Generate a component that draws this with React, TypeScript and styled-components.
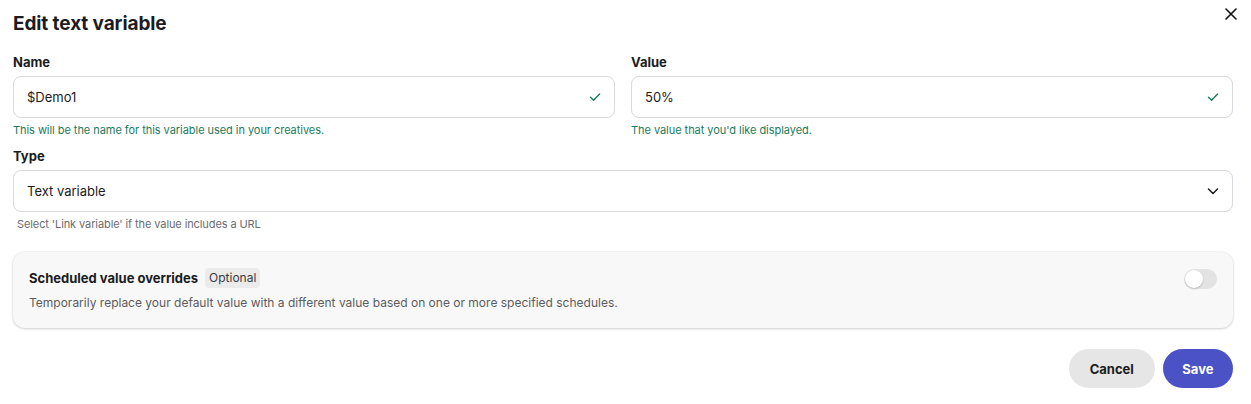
import React from "react";
import styled, { createGlobalStyle } from "styled-components";

const Global = createGlobalStyle`
  html, body { margin: 0; padding: 0; background: #fff; }
  body { font-family: "Inter", "Noto Sans", sans-serif; color: #1c1c1e; }
  * { box-sizing: border-box; }
`;

const Dialog = styled.div`
  width: 1251px;
  height: 404px;
  padding: 12px 18px 0 13px;
  display: flex;
  flex-direction: column;
`;

const Header = styled.div`
  display: flex;
  align-items: flex-start;
  justify-content: space-between;
  height: 42px;
`;

const Title = styled.h1`
  margin: 0;
  font-size: 19px;
  line-height: 24px;
  font-weight: 700;
  letter-spacing: -0.1px;
  color: #1c1c1e;
`;

const CloseButton = styled.button`
  border: 0;
  background: none;
  padding: 0;
  margin: -6px -6px 0 0;
  width: 16px;
  height: 16px;
  display: flex;
  align-items: center;
  justify-content: center;
  color: #111;
`;

const Row = styled.div`
  display: grid;
  grid-template-columns: 1fr 1fr;
  column-gap: 16px;
  width: 1220px;
`;

const Field = styled.div`
  display: flex;
  flex-direction: column;
`;

const Label = styled.label`
  font-size: 13px;
  font-weight: 700;
  line-height: 16px;
  margin-bottom: 6px;
  color: #1c1c1e;
`;

const InputBox = styled.div`
  height: 42px;
  border: 1px solid #d9d9de;
  border-radius: 8px;
  display: flex;
  align-items: center;
  justify-content: space-between;
  padding: 0 12px 0 13px;
  font-size: 13px;
  color: #1c1c1e;
  background: #fff;
`;

const Help = styled.div<{ $tone?: "ok" | "muted" }>`
  font-size: 11px;
  line-height: 14px;
  margin-top: 5px;
  letter-spacing: ${(p) => (p.$tone === "ok" ? "-0.05px" : "-0.1px")};
  color: ${(p) => (p.$tone === "ok" ? "#1b7a5e" : "#6b6b70")};
  padding-left: ${(p) => (p.$tone === "ok" ? "0" : "4px")};
`;

const TypeField = styled(Field)`
  width: 1220px;
  margin-top: 11px;
`;

const Card = styled.section`
  width: 1220px;
  margin-top: 21px;
  height: 76px;
  background: #f8f8f8;
  border-radius: 12px;
  box-shadow: 0 1px 3px rgba(0, 0, 0, 0.16), 0 0 0 1px rgba(0, 0, 0, 0.03);
  display: flex;
  justify-content: space-between;
  padding: 16px 16px 0 16px;
`;

const CardText = styled.div`
  display: flex;
  flex-direction: column;
  gap: 7px;
`;

const CardTitleRow = styled.div`
  display: flex;
  align-items: center;
  gap: 7px;
`;

const CardTitle = styled.span`
  font-size: 13px;
  font-weight: 700;
  color: #1c1c1e;
  line-height: 20px;
`;

const Badge = styled.span`
  font-size: 12px;
  line-height: 20px;
  padding: 0 4px;
  border-radius: 4px;
  background: #ebebeb;
  color: #3a3a3e;
`;

const CardDesc = styled.div`
  font-size: 12px;
  line-height: 16px;
  color: #5c5c60;
`;

const Toggle = styled.div`
  width: 33px;
  height: 20px;
  border-radius: 10px;
  background: #e3e3e3;
  position: relative;
  margin-top: 1px;
  &::after {
    content: "";
    position: absolute;
    left: 1px;
    top: 1px;
    width: 18px;
    height: 18px;
    border-radius: 50%;
    background: #fff;
    box-shadow: 0 1px 2px rgba(0, 0, 0, 0.2);
  }
`;

const Footer = styled.div`
  width: 1220px;
  display: flex;
  justify-content: flex-end;
  gap: 8px;
  margin-top: 21px;
`;

const Button = styled.button<{ $primary?: boolean }>`
  height: 39px;
  border-radius: 20px;
  border: 0;
  padding: 0 ${(p) => (p.$primary ? "19.5px" : "21px")};
  font-family: inherit;
  font-size: 13px;
  font-weight: 700;
  background: ${(p) => (p.$primary ? "#4b52c6" : "#e6e6e6")};
  color: ${(p) => (p.$primary ? "#fff" : "#1c1c1e")};
`;

const Check = () => (
  <svg width="14" height="14" viewBox="0 0 14 14" fill="none">
    <path d="M2.5 7.2 5.6 10.2 11.6 4" stroke="#1b7a5e" strokeWidth="1.4" strokeLinecap="round" strokeLinejoin="round" />
  </svg>
);

const Chevron = () => (
  <svg width="14" height="14" viewBox="0 0 14 14" fill="none">
    <path d="M2.5 5 7 9.5 11.5 5" stroke="#1c1c1e" strokeWidth="1.5" strokeLinecap="round" strokeLinejoin="round" />
  </svg>
);

const Cross = () => (
  <svg width="14" height="14" viewBox="0 0 14 14" fill="none">
    <path d="M2 2 12 12M12 2 2 12" stroke="#111" strokeWidth="1.6" strokeLinecap="round" />
  </svg>
);

export default function App() {
  return (
    <>
      <Global />
      <Dialog>
        <Header>
          <Title>Edit text variable</Title>
          <CloseButton aria-label="Close">
            <Cross />
          </CloseButton>
        </Header>
        <Row>
          <Field>
            <Label>Name</Label>
            <InputBox>
              <span>$Demo1</span>
              <Check />
            </InputBox>
            <Help $tone="ok">This will be the name for this variable used in your creatives.</Help>
          </Field>
          <Field>
            <Label>Value</Label>
            <InputBox>
              <span>50%</span>
              <Check />
            </InputBox>
            <Help $tone="ok">The value that you'd like displayed.</Help>
          </Field>
        </Row>
        <TypeField>
          <Label>Type</Label>
          <InputBox>
            <span>Text variable</span>
            <Chevron />
          </InputBox>
          <Help $tone="muted">Select 'Link variable' if the value includes a URL</Help>
        </TypeField>
        <Card>
          <CardText>
            <CardTitleRow>
              <CardTitle>Scheduled value overrides</CardTitle>
              <Badge>Optional</Badge>
            </CardTitleRow>
            <CardDesc>
              Temporarily replace your default value with a different value based on one or more specified schedules.
            </CardDesc>
          </CardText>
          <Toggle />
        </Card>
        <Footer>
          <Button>Cancel</Button>
          <Button $primary>Save</Button>
        </Footer>
      </Dialog>
    </>
  );
}
